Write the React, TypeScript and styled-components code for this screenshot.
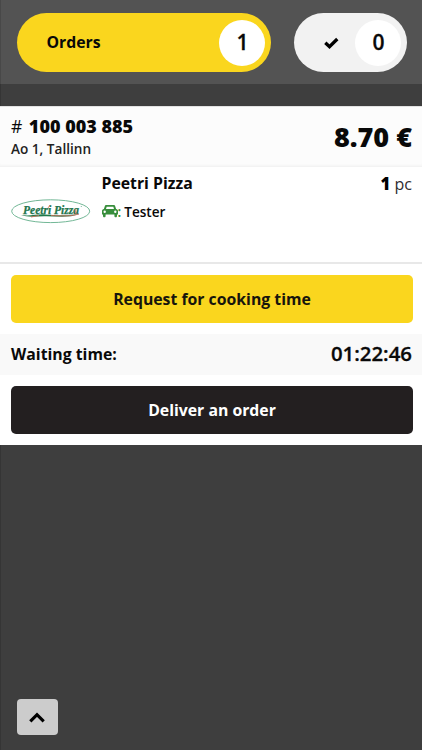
import React from "react";
import styled, { createGlobalStyle } from "styled-components";

const GlobalStyle = createGlobalStyle`
  * { box-sizing: border-box; }
  body { margin: 0; background: #3e3e3e; }
`;

const Page = styled.div`
  height: 750px;
  display: flex;
  flex-direction: column;
  background: #3e3e3e;
  box-shadow: inset 1px 0 #353535;
  color: #090909;
  font-family: "Open Sans", sans-serif;
  font-size: 15.8px;
  overflow: hidden;
`;

const TopBar = styled.header`
  height: 84px;
  flex: none;
  padding: 13px 15px 0 17px;
  display: flex;
  justify-content: space-between;
  align-items: flex-start;
  background: #535353;
  box-shadow: inset 1px 0 #484848;
`;

const Pill = styled.div<{ $active?: boolean }>`
  width: ${(p) => (p.$active ? 254 : 113.5)}px;
  height: 59px;
  border-radius: 30px;
  padding: 0 6px 0 ${(p) => (p.$active ? 29.5 : 30.5)}px;
  display: flex;
  align-items: center;
  justify-content: space-between;
  background: ${(p) => (p.$active ? "#fad61e" : "#f2f2f2")};
  font-weight: 700;
  line-height: 20px;
  svg { display: block; }
`;

const PillLabel = styled.span`
  padding-bottom: 1px;
`;

const Count = styled.span`
  width: 46px;
  height: 46px;
  border-radius: 50%;
  display: flex;
  align-items: center;
  justify-content: center;
  background: #fff;
  padding: 0 0 1px 1px;
  font-size: 21px;
  font-weight: 600;
  -webkit-text-stroke: 0.3px;
`;

const Card = styled.main`
  flex: none;
  height: 339px;
  margin-top: 22px;
  background: #fff;
`;

const OrderHead = styled.div`
  height: 61px;
  padding: 0 10px 1px 11px;
  display: flex;
  justify-content: space-between;
  align-items: center;
  background: #fcfcfc;
  border-top: 1px solid #e2e2e2;
  box-shadow: inset 0 -3px 3px -2px #eee;
`;

const OrderNumber = styled.div`
  font-size: 17.5px;
  line-height: 24px;
  margin-top: -1px;
  b { font-weight: 800; font-size: 18px; margin-left: 2px; }
`;

const Address = styled.div`
  font-size: 13.6px;
  line-height: 20px;
  margin-top: 1px;
  font-weight: 600;
  color: #222;
`;

const Price = styled.div`
  font-size: 27px;
  font-weight: 800;
  line-height: 34px;
`;

const Product = styled.div`
  height: 97px;
  padding: 0 10px 0 11px;
  display: flex;
  border-bottom: 2px solid #e8e8e8;
`;

const LogoSlot = styled.div`
  width: 90.5px;
  padding-top: 32px;
  svg { display: block; }
`;

const ProductInfo = styled.div`
  flex: 1;
  padding-top: 5px;
`;

const ProductName = styled.div`
  font-size: 15.8px;
  font-weight: 700;
  line-height: 22px;
`;

const Courier = styled.div`
  height: 20px;
  margin-top: 7px;
  display: flex;
  align-items: center;
  gap: 3px;
  font-size: 13.6px;
  font-weight: 600;
  i { display: flex; align-items: center; color: #388e3c; font-style: normal; font-weight: 600; }
`;

const Quantity = styled.div`
  padding-top: 6px;
  line-height: 22px;
  font-size: 16px;
  color: #302c30;
  b { font-weight: 800; font-size: 16.8px; color: #000; }
`;

const ButtonRow = styled.div`
  padding: 11px 9px 11px 11px;
`;

const ActionButton = styled.button<{ $dark?: boolean }>`
  display: block;
  width: 100%;
  height: 48px;
  padding: 0;
  border: 0;
  border-radius: 5px;
  background: ${(p) => (p.$dark ? "#231f20" : "#fad61e")};
  color: ${(p) => (p.$dark ? "#fff" : "#17150c")};
  font: 700 15.8px/22px "Open Sans", sans-serif;
`;

const Waiting = styled.div`
  height: 40.5px;
  padding: 0 10px 1px 11px;
  display: flex;
  align-items: center;
  justify-content: space-between;
  background: #f9f9f9;
  font-weight: 700;
`;

const Timer = styled.span`
  padding-bottom: 2px;
  font-size: 20.4px;
  font-weight: 600;
  -webkit-text-stroke: 0.3px;
`;

const TopButton = styled.button`
  width: 40.5px;
  height: 36px;
  margin: auto 0 15px 17px;
  padding: 0;
  border: 0;
  border-radius: 4px;
  display: flex;
  align-items: center;
  justify-content: center;
  background: #ccc;
`;

const CheckIcon = () => (
  <svg width="15" height="12" viewBox="0 0 15 12">
    <path d="M1.3 5.7 5.5 9.7 13.3 2" fill="none" stroke="#000" strokeWidth="3.3" />
  </svg>
);

const CarIcon = () => (
  <svg width="16" height="14" viewBox="0 0 16 14">
    <path
      fillRule="evenodd"
      fill="#388e3c"
      d="M4.5 1h7c.9 0 1.5.5 1.8 1.4L14.1 5c1.2.2 1.9.9 1.9 2v3.5h-1V12c0 .8-.5 1.3-1.3 1.3S12.4 12.8 12.4 12v-1.500H3.600V12c0 .8-.5 1.300-1.300 1.300S1 12.800 1 12v-1.500H0V7c0-1.100.7-1.800 1.900-2l.8-2.600C3 1.500 3.600 1 4.500 1ZM4.700 2.700 4 5h8l-.7-2.300ZM2.700 6.600a1.200 1.200 0 1 0 0 2.400 1.200 1.200 0 0 0 0-2.400Zm10.600 0a1.200 1.200 0 1 0 0 2.400 1.200 1.200 0 0 0 0-2.400Z"
    />
  </svg>
);

const ChevronIcon = () => (
  <svg width="16" height="11" viewBox="0 0 16 11">
    <path d="M1.3 9.3 8 2.7l6.7 6.6" fill="none" stroke="#000" strokeWidth="3.2" />
  </svg>
);

const PizzaLogo = () => (
  <svg width="80" height="25" viewBox="0 0 80 25">
    <ellipse cx="39.7" cy="12.2" rx="39" ry="11.4" fill="#fff" stroke="#72b796" strokeWidth="1" />
    <text
      x="12"
      y="15"
      fontFamily="Liberation Serif, serif"
      fontSize="12"
      fontStyle="italic"
      fontWeight="700"
      fill="#24764e"
      stroke="#24764e"
      strokeWidth="0.25"
      textLength="56"
      lengthAdjust="spacingAndGlyphs"
    >
      Peetri Pizza
    </text>
    <path d="M10 16c9 1.500 15-1 24-.6s19 2 34-.3c-9 4-21 2.500-33 2.200-9-.2-18 1.500-25-1.300Z" fill="#1f7a4a" />
    <path d="M40 16.5c9 .3 19 1.200 28-1.500M20 18l8-1.500M39 6l-2 3M64 10l1 5" fill="none" stroke="#dc6a5b" strokeWidth="0.8" />
    <circle cx="70.3" cy="7.5" r="0.6" fill="#72b796" />
  </svg>
);

export default function App() {
  return (
    <>
      <GlobalStyle />
      <Page>
        <TopBar>
          <Pill $active>
            <PillLabel>Orders</PillLabel>
            <Count>1</Count>
          </Pill>
          <Pill>
            <CheckIcon />
            <Count>0</Count>
          </Pill>
        </TopBar>
        <Card>
          <OrderHead>
            <div>
              <OrderNumber># <b>100 003 885</b></OrderNumber>
              <Address>Ao 1, Tallinn</Address>
            </div>
            <Price>8.70 €</Price>
          </OrderHead>
          <Product>
            <LogoSlot><PizzaLogo /></LogoSlot>
            <ProductInfo>
              <ProductName>Peetri Pizza</ProductName>
              <Courier><i><CarIcon />:</i>Tester</Courier>
            </ProductInfo>
            <Quantity><b>1</b> pc</Quantity>
          </Product>
          <ButtonRow><ActionButton>Request for cooking time</ActionButton></ButtonRow>
          <Waiting>
            Waiting time:
            <Timer>01:22:46</Timer>
          </Waiting>
          <ButtonRow><ActionButton $dark>Deliver an order</ActionButton></ButtonRow>
        </Card>
        <TopButton aria-label="Scroll to top"><ChevronIcon /></TopButton>
      </Page>
    </>
  );
}
